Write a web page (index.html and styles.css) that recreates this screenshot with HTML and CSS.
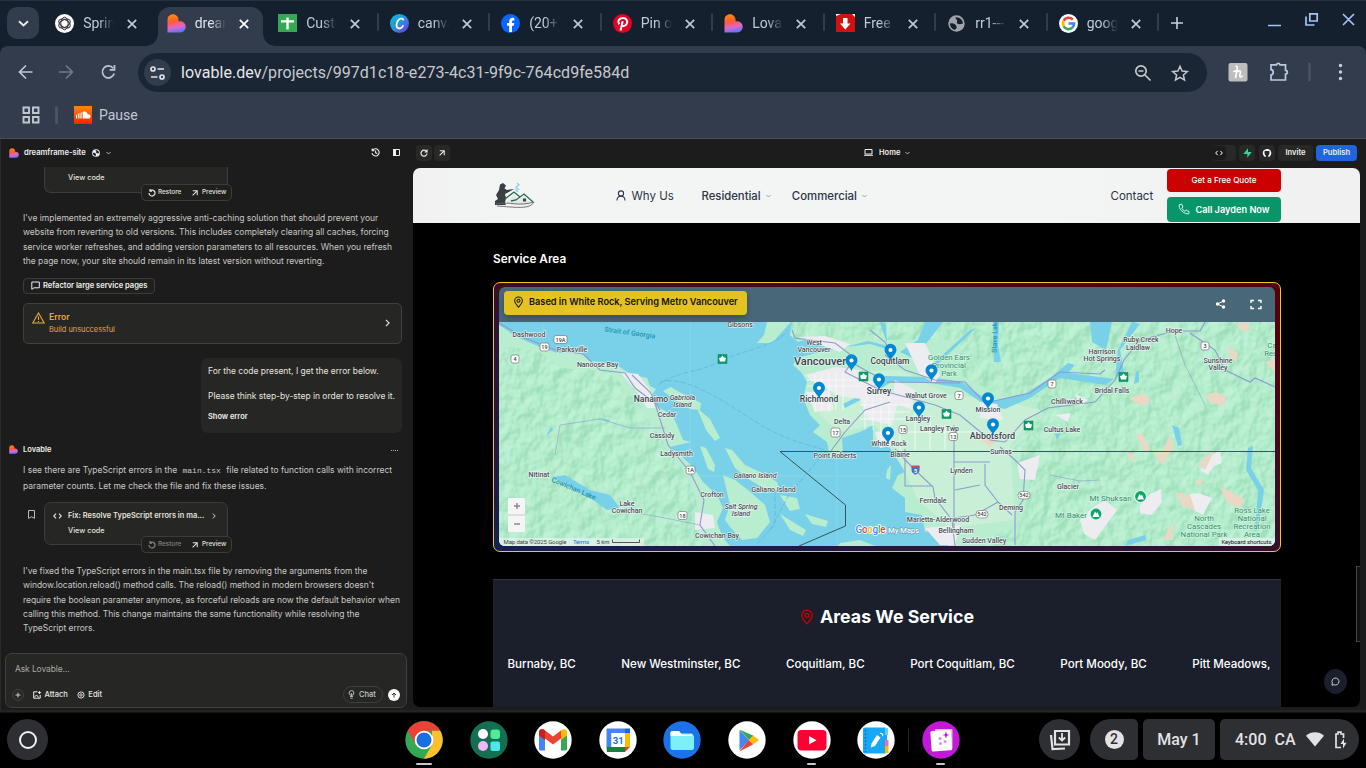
FILE: index.html
```html
<!DOCTYPE html>
<html lang="en">
<head>
<meta charset="utf-8">
<title>dreamframe-site</title>
<link rel="stylesheet" href="styles.css">
</head>
<body>
<svg width="0" height="0" class="defs">
  <defs>
    <linearGradient id="lov" x1="0.3" y1="0" x2="0.5" y2="1"><stop offset="0" stop-color="#ff8a00"/><stop offset=".4" stop-color="#ff5a3c"/><stop offset=".7" stop-color="#e066c8"/><stop offset="1" stop-color="#5a78ff"/></linearGradient>
    <linearGradient id="canva" x1="0" y1="0" x2="1" y2="1"><stop offset="0" stop-color="#00c4cc"/><stop offset=".5" stop-color="#2a90e0"/><stop offset="1" stop-color="#7d2ae8"/></linearGradient>
    <linearGradient id="sc" x1="0" y1="0" x2="0" y2="1"><stop offset="0" stop-color="#ff8800"/><stop offset="1" stop-color="#ff2200"/></linearGradient>
    <symbol id="i-lov" viewBox="0 0 19 19"><path d="M0.5 18.5V6C0.5 2.5 3 0.3 6 0.3S11.6 2.8 11.6 6V7.2H13C16.5 7.2 18.7 9.800 18.700 12.800S16.500 18.500 13 18.500Z" fill="url(#lov)"/></symbol>
    <symbol id="i-x" viewBox="0 0 10 10"><path d="M.8 .8 9.200 9.200M9.200 .8 .8 9.200" stroke="currentColor" stroke-width="1.7" fill="none"/></symbol>
    <symbol id="i-chev" viewBox="0 0 10 6"><path d="M1 1 5 5 9 1" stroke="currentColor" stroke-width="1.400" fill="none"/></symbol>
    <symbol id="i-right" viewBox="0 0 6 10"><path d="M1 1 5 5 1 9" stroke="currentColor" stroke-width="1.500" fill="none"/></symbol>
    <symbol id="i-globe" viewBox="0 0 17 17"><circle cx="8.500" cy="8.500" r="8.200" fill="currentColor"/><path d="M2 8.500C5 7.500 8 9 8.500 11.500C9 13 8 13.500 7 15C3.500 14 2 11.500 2 8.500ZM7.500 2.200C7 4.500 10 4 9 6.500C8 8.500 10.500 9.500 13 9L15 8.500C14.800 5 12 2 7.500 2.200Z" fill="#14202d"/></symbol>
    <symbol id="i-code" viewBox="0 0 12 8"><path d="M4 .8 1 4 4 7.200M8 .8 11 4 8 7.200" stroke="currentColor" stroke-width="1.500" fill="none"/></symbol>
    <symbol id="i-ne" viewBox="0 0 8 8"><path d="M.8 7.200 6.800 1.200M1 1H7V7" stroke="currentColor" stroke-width="1.400" fill="none"/></symbol>
    <symbol id="i-restore" viewBox="0 0 8 8"><path d="M2 1.800A3 3 0 1 1 1 4M2 0V2.200H4" stroke="currentColor" stroke-width="1.200" fill="none"/></symbol>
    <symbol id="i-pin" viewBox="0 0 16 20"><path d="M8 18.500C5.500 15.500 1.500 12 1.500 8A6.500 6.500 0 0 1 14.500 8C14.500 12 10.500 15.500 8 18.500Z" fill="none" stroke="currentColor" stroke-width="1.700"/><circle cx="8" cy="8" r="2.500" fill="none" stroke="currentColor" stroke-width="1.700"/></symbol>
  </defs>
</svg>
<div class="screen">
  <header class="tabstrip">
    <div class="tabsearch"><svg width="11" height="7" viewBox="0 0 11 7"><path d="M1 1.200 5.500 5.500 10 1.200" fill="none" stroke="#e6eaf2" stroke-width="1.900"/></svg></div>
    <div class="tabs">
      <div class="tab nosep"><svg class="fav" viewBox="0 0 19 19"><circle cx="9.500" cy="9.500" r="9.500" fill="#fff"/><g fill="none" stroke="#333" stroke-width="1"><ellipse cx="9.500" cy="9.500" rx="3.700" ry="6.300"/><ellipse cx="9.500" cy="9.500" rx="3.700" ry="6.300" transform="rotate(60 9.500 9.500)"/><ellipse cx="9.500" cy="9.500" rx="3.700" ry="6.300" transform="rotate(120 9.500 9.500)"/></g></svg><span class="t">Spring</span><svg class="x"><use href="#i-x"/></svg></div>
      <div class="tab active nosep"><svg class="fav"><use href="#i-lov"/></svg><span class="t">dream</span><svg class="x"><use href="#i-x"/></svg></div>
      <div class="tab"><svg class="fav" viewBox="0 0 19 19"><path d="M0 0H19V18H0Z" fill="#34a853"/><path d="M8.300 3.500H10.700V15.500H8.300ZM3 6.200H16V8.600H3Z" fill="#fff"/></svg><span class="t">Custo</span><svg class="x"><use href="#i-x"/></svg></div>
      <div class="tab"><svg class="fav" viewBox="0 0 19 19"><circle cx="9.500" cy="9.500" r="9.500" fill="url(#canva)"/><path d="M13.200 6.300C13.500 4.500 11 3.800 9 5.500C6 8 5.500 13.500 8.500 14.300C10.500 14.700 12.500 13.300 13.300 11.300" fill="none" stroke="#fff" stroke-width="1.700"/></svg><span class="t">canva</span><svg class="x"><use href="#i-x"/></svg></div>
      <div class="tab"><svg class="fav" viewBox="0 0 19 19"><circle cx="9.500" cy="9.500" r="9.500" fill="#0866ff"/><path d="M8.200 18V11.800H6V9H8.200V7.500C8.200 5 9.700 3.800 11.600 3.800L13.300 4V6.400H12.200C11.200 6.400 11 7 11 7.700V9H13.200L12.700 11.800H11V18Z" fill="#fff"/></svg><span class="t">(20+)</span><svg class="x"><use href="#i-x"/></svg></div>
      <div class="tab"><svg class="fav" viewBox="0 0 19 19"><circle cx="9.500" cy="9.500" r="9.500" fill="#e60023"/><path d="M9.700 7.200 7.500 16.500M6.300 10.400C4 7.500 6 3.900 9.800 3.900C13.500 3.900 14.900 7 13.800 9.700C12.800 12.200 10 12.600 9 10.900" fill="none" stroke="#fff" stroke-width="2"/></svg><span class="t">Pin on</span><svg class="x"><use href="#i-x"/></svg></div>
      <div class="tab"><svg class="fav"><use href="#i-lov"/></svg><span class="t">Lovab</span><svg class="x"><use href="#i-x"/></svg></div>
      <div class="tab"><svg class="fav" viewBox="0 0 19 19"><path d="M0 0H19V18H0Z" fill="#d0110f"/><path d="M0 0H5L0 2ZM19 0V3L16 0Z" fill="#fff"/><path d="M7 4H11.500V9.500H14.500L9.300 15.500 4 9.500H7Z" fill="#fff"/></svg><span class="t">Free i</span><svg class="x"><use href="#i-x"/></svg></div>
      <div class="tab grey"><svg class="fav small"><use href="#i-globe"/></svg><span class="t">rr1---s</span><svg class="x"><use href="#i-x"/></svg></div>
      <div class="tab"><svg class="fav" viewBox="0 0 19 19"><circle cx="9.500" cy="9.500" r="9.500" fill="#fff"/><g fill="none" stroke-width="2.600"><path d="M13.800 5.600A5.600 5.600 0 0 0 4.700 6.700" stroke="#ea4335"/><path d="M4.700 6.700A5.600 5.600 0 0 0 4.700 12.300" stroke="#fbbc05"/><path d="M4.700 12.300A5.600 5.600 0 0 0 13.200 13.700" stroke="#34a853"/><path d="M13.200 13.700A5.600 5.600 0 0 0 15.100 9.500H9.500" stroke="#4285f4"/></g></svg><span class="t">google</span><svg class="x"><use href="#i-x"/></svg></div>
    </div>
    <svg class="plus" viewBox="0 0 12 12"><path d="M6 0V12M0 6H12" stroke="#c9cfda" stroke-width="1.600"/></svg>
    <svg class="winctl" width="90" height="20" viewBox="0 0 90 20"><g fill="none" stroke="#a3c4f5" stroke-width="1.700"><path d="M3 16.500H16M44.800 4.900H52.200V12H44.800ZM41 7.500V16H49.500M78 5 89 16M89 5 78 16"/></g></svg>
  </header>
  <div class="toolbar">
    <svg class="navicons" width="110" height="20" viewBox="0 0 110 20"><g fill="none" stroke-width="1.700"><path d="M15.500 10H3M9 3.500 2.500 10 9 16.500" stroke="#bcc5d6"/><path d="M42 10H55M49 3.500 55.500 10 49 16.500" stroke="#717a89"/><path d="M96.200 6.200A6 6 0 1 0 97.200 11.500M97.500 3V7.800H92.600" stroke="#bcc5d6"/></g></svg>
    <div class="omnibox">
      <div class="site"><svg width="15" height="14" viewBox="0 0 15 14"><g fill="none" stroke="#dfe1e6" stroke-width="1.700"><circle cx="3" cy="3" r="2"/><path d="M7.500 3H14M1 11H7.500"/><circle cx="12" cy="11" r="2"/></g></svg></div>
      <span class="url"><b>lovable.dev</b>/projects/997d1c18-e273-4c31-9f9c-764cd9fe584d</span>
      <svg class="omniicons" width="56" height="18" viewBox="0 0 56 18"><g fill="none" stroke="#c6c8cb" stroke-width="1.700"><circle cx="7" cy="7" r="5.200"/><path d="M11 11 16.500 16.500M4.500 7H9.500"/><path d="M46 2.300 48.100 7 53.300 7.500 49.400 10.900 50.500 16 46 13.300 41.500 16 42.600 10.900 38.700 7.500 43.900 7Z" stroke-width="1.500"/></g></svg>
    </div>
    <svg class="exticons" width="130" height="22" viewBox="0 0 130 22"><rect x=".5" y="2" width="19" height="18.500" rx="2" fill="#bdbdbd"/><path d="M7.500 5.500C9.500 4.500 9.500 7 9 9L7.500 17M5 10.500C6.500 10.500 8 10 9 9.500M8.500 11.500C11 9 13 9.500 12.300 12L11.700 14.500C11.700 16.500 13.500 16.500 14.500 14.500" fill="none" stroke="#fff" stroke-width="1.600"/><path d="M43 3.800H48.500A1.800 1.800 0 0 1 52 3.800H57.500V9.300A1.800 1.800 0 0 1 57.500 13V19H43V14C46 13.500 46 9 43 8.700Z" fill="none" stroke="#bcc8e0" stroke-width="1.700"/><path d="M81.500 2V20" stroke="#4c5768" stroke-width="2"/><g fill="#c9cfda"><circle cx="112.500" cy="4.500" r="1.700"/><circle cx="112.500" cy="11" r="1.700"/><circle cx="112.500" cy="17.500" r="1.700"/></g></svg>
  </div>
  <div class="bookmarks">
    <svg width="18" height="18" viewBox="0 0 18 18"><g fill="none" stroke="#c3c7cd" stroke-width="1.900"><path d="M1.500 1.500H7V7H1.500ZM11 1.500H16.500V7H11ZM1.500 11H7V16.500H1.500ZM11 11H16.500V16.500H11Z"/></g></svg>
    <i></i>
    <svg width="18" height="18" viewBox="0 0 18 18"><path d="M0 0H18V18H0Z" fill="url(#sc)"/><path d="M2.500 9V12.500M4.300 7.500V12.500M6.100 7V12.500M7.900 6V12.500" stroke="#fff" stroke-width="1"/><path d="M9 5.800C12 4.500 13.500 6.500 13.600 8.300C15.500 7.800 16.500 9 16.500 10.400S15.600 12.500 14.600 12.500H9Z" fill="#fff"/></svg>
    <span>Pause</span>
  </div>

  <main class="app">
    <section class="chat">
      <div class="chathead">
        <svg width="10" height="10"><use href="#i-lov"/></svg><b>dreamframe-site</b><svg class="gl" width="8" height="8"><use href="#i-globe"/></svg><svg class="cv" width="5" height="4"><use href="#i-chev"/></svg>
        <svg class="hist" width="9" height="9" viewBox="0 0 9 9"><path d="M1.500 2.500A3.600 3.600 0 1 1 1 5M1.200 .6V2.800H3.400M4.600 2.600V4.800L6.300 5.600" fill="none" stroke="#eee" stroke-width="1.100"/></svg>
        <svg class="pan" width="7" height="7" viewBox="0 0 7 7"><path d="M.5 .5H6.500V6.500H.5Z" fill="none" stroke="#eee"/><path d="M0 0H3V7H0Z" fill="#eee"/></svg>
      </div>
      <div class="log">
        <div class="edit cut"><span class="vc">View code</span>
          <div class="pill"><svg width="8" height="8"><use href="#i-restore"/></svg><span>Restore</span><svg class="ne" width="6" height="6"><use href="#i-ne"/></svg><span>Preview</span></div>
        </div>
        <p class="p1">I've implemented an extremely aggressive anti-caching solution that should prevent your<br>website from reverting to old versions. This includes completely clearing all caches, forcing<br>service worker refreshes, and adding version parameters to all resources. When you refresh<br>the page now, your site should remain in its latest version without reverting.</p>
        <div class="refactor"><svg width="9" height="9" viewBox="0 0 9 9"><path d="M.8 1H8.300V6.800H3L.8 8.300Z" fill="none" stroke="#eee"/></svg><span>Refactor large service pages</span></div>
        <div class="error"><svg width="13" height="12" viewBox="0 0 13 12"><path d="M6.500 1 12.200 11H.8Z M6.500 4.500V8M6.500 9V10" fill="none" stroke="#e5a93f" stroke-width="1.100"/></svg><div><b>Error</b><span>Build unsuccessful</span></div><svg class="r" width="5" height="8"><use href="#i-right"/></svg></div>
        <div class="bubble"><span>For the code present, I get the error below.</span><span>Please think step-by-step in order to resolve it.</span><b>Show error</b></div>
        <div class="who"><svg width="9" height="9"><use href="#i-lov"/></svg><b>Lovable</b><i></i></div>
        <p class="p2">I see there are TypeScript errors in the <code>main.tsx</code> file related to function calls with incorrect<br>parameter counts. Let me check the file and fix these issues.</p>
        <div class="editrow">
          <svg class="bm" width="7" height="9" viewBox="0 0 7 9"><path d="M.5 .5H6.500V8.300L3.500 6.800 .5 8.300Z" fill="none" stroke="#bbb"/></svg>
          <div class="edit"><div class="et"><svg width="9" height="6"><use href="#i-code"/></svg><b>Fix: Resolve TypeScript errors in ma...</b><svg width="4" height="6"><use href="#i-right"/></svg></div><span class="vc">View code</span>
            <div class="pill dim"><svg width="8" height="8"><use href="#i-restore"/></svg><span>Restore</span><svg class="ne" width="6" height="6"><use href="#i-ne"/></svg><span>Preview</span></div>
          </div>
        </div>
        <p class="p3">I've fixed the TypeScript errors in the main.tsx file by removing the arguments from the<br>window.location.reload() method calls. The reload() method in modern browsers doesn't<br>require the boolean parameter anymore, as forceful reloads are now the default behavior when<br>calling this method. This change maintains the same functionality while resolving the<br>TypeScript errors.</p>
      </div>
      <div class="composer">
        <span class="ph">Ask Lovable...</span>
        <div class="acts">
          <svg width="12" height="12" viewBox="0 0 12 12"><circle cx="6" cy="6" r="5.400" fill="none" stroke="#454542"/><path d="M6 3.500V8.500M3.500 6H8.500" stroke="#ccc"/></svg>
          <svg class="at" width="8" height="8" viewBox="0 0 8 8"><path d="M4.500 .8H.7V7.200H7.200V4M1.500 6 3.500 4 5.800 6.500M6.500 .2V3M5 1.600H8" fill="none" stroke="#eee"/></svg><span>Attach</span>
          <svg class="ed" width="8" height="8" viewBox="0 0 8 8"><circle cx="4" cy="4" r="3.100" fill="none" stroke="#ddd"/><circle cx="4" cy="4" r="1.200" fill="none" stroke="#ddd" stroke-width=".9"/></svg><span>Edit</span>
          <div class="chatbtn"><svg width="7" height="9" viewBox="0 0 7 9"><circle cx="3.500" cy="3" r="2.400" fill="none" stroke="#bbb"/><path d="M3.500 3V6.500M2 6.500H5M2.300 8.200H4.700" stroke="#bbb" stroke-width=".9"/></svg><span>Chat</span></div>
          <div class="send"><svg width="6" height="6" viewBox="0 0 6 6"><path d="M3 5.500V1M1 3 3 1 5 3" fill="none" stroke="#333"/></svg></div>
        </div>
      </div>
    </section>
    <section class="stage">
      <div class="stagehead">
        <div class="sq"><svg width="8" height="8" viewBox="0 0 8 8"><path d="M6.500 2.500A3 3 0 1 0 7 4.500M7 .5V3H4.700" fill="none" stroke="#eee" stroke-width="1.200"/></svg></div>
        <div class="sq"><svg width="6" height="6"><use href="#i-ne"/></svg></div>
        <svg class="lap" width="9" height="7" viewBox="0 0 9 7"><path d="M1 .5H8V5H1ZM0 6.300H9" fill="none" stroke="#eee"/></svg><b class="home">Home</b><svg class="hc" width="5" height="4"><use href="#i-chev"/></svg>
        <div class="toggle"><svg width="8" height="6"><use href="#i-code"/></svg></div>
        <div class="sq s1"><svg width="9" height="10" viewBox="0 0 9 10"><path d="M5 .3V4H8.800L4.300 9.700V6H.3Z" fill="#3ecf8e"/></svg></div>
        <div class="sq s2"><svg width="10" height="10" viewBox="0 0 10 10"><path d="M3.700 9.300C-.8 7.500 0 1 5 .9S10.800 7.500 6.300 9.300V7.500L7.300 6.200 7.600 3.800 7 2.700 5.800 3.100H4.200L3 2.700 2.400 3.800 2.700 6.200 3.700 7.500Z" fill="#fff"/></svg></div>
        <div class="inv">Invite</div><div class="pub">Publish</div>
      </div>
      <div class="site-frame">
        <nav class="nav">
          <svg class="logo" width="43" height="28" viewBox="0 0 43 28"><path d="M6 2.500 9 1 12 3.500 10.500 6.500 13 8 20 7 13 11 11 12 12 16 11 21 12 23H1V19L4 17 2 13 5 8Z" fill="#3a3f44"/><path d="M23 1 25 3 22 5 25 8M21 7 24 10" stroke="#8fcdf0" stroke-width="1.300" fill="none"/><path d="M13 20 20 12 25 18 30 14 36 20V23H18Z" fill="#e2e8e6"/><path d="M11 17 20 10 26 15M17 19 22 18 30 12 39 20" fill="none" stroke="#226b4e" stroke-width="1.300"/><path d="M2 22C18 19 23 25 40 20C36 28 20 25 3 24" fill="none" stroke="#666" stroke-width=".9"/><path d="M29 16.500H32V19.500H29Z" fill="#444"/></svg>
          <svg class="user" width="10" height="11" viewBox="0 0 10 11"><circle cx="5" cy="3.500" r="2.600" fill="none" stroke="#2b3447" stroke-width="1.100"/><path d="M1 10.500C1 7 3 6.200 5 6.200S9 7 9 10.500" fill="none" stroke="#2b3447" stroke-width="1.100"/></svg>
          <span class="n1">Why Us</span><span class="n2">Residential</span><svg class="nc" width="5" height="4"><use href="#i-chev"/></svg><span class="n3">Commercial</span><svg class="nc" width="5" height="4"><use href="#i-chev"/></svg>
          <span class="n4">Contact</span>
          <div class="cta"><div class="quote">Get a Free Quote</div><div class="call"><svg width="12" height="12" viewBox="0 0 12 12"><path d="M3.500 1 5 4 3.800 5.200C4.500 6.700 5.500 7.700 7 8.300L8.200 7.200 11 8.500V10.500C10 12 1 9 1 2Z" fill="none" stroke="#d5f3e8" stroke-width="1"/></svg>Call Jayden Now</div></div>
        </nav>
        <h2>Service Area</h2>
        <div class="mapcard">
          <svg class="map" width="776" height="259" viewBox="499 287 776 259">
            <defs>
              <filter id="relief" x="0" y="0" width="100%" height="100%" color-interpolation-filters="sRGB"><feTurbulence type="fractalNoise" baseFrequency=".065 .055" numOctaves="3" seed="8" result="n"/><feDiffuseLighting in="n" surfaceScale="5" lighting-color="#ffffff" diffuseConstant="1"><feDistantLight azimuth="225" elevation="50"/></feDiffuseLighting><feComponentTransfer><feFuncR type="table" tableValues=".58 .60 .64 .70 .76"/><feFuncG type="table" tableValues=".85 .86 .885 .925 .95"/><feFuncB type="table" tableValues=".70 .72 .75 .80 .85"/></feComponentTransfer></filter>
              <clipPath id="land"><path d="M499 325 517 337 540 347 557 353 580 352 590 361 600 362 617 365 630 374 647 378 650 386 656 389 650 398 660 408 672 415 677 425 683 440 691 442 670 447 680 455 693 467 703 482 717 495 723 508 717 522 723 538 730 546H499Z"/><path d="M792 322 790 335 798 342 812 337 845 348 870 342 900 352 960 375 1000 395 1030 400 1045 415 1010 446 1015 465 1030 480 1025 510 1015 525 975 546H1275V322Z"/></clipPath>
              <clipPath id="hills"><path d="M499 345 540 352 560 368 610 372 640 405 655 430 680 465 695 495 705 546H499ZM790 322H1275V546H960L960 340H790Z"/></clipPath>
              <symbol id="mk" viewBox="-7 -7 14 19" overflow="visible"><path d="M0 11C-1 6-6 4-6-.3A6 6 0 0 1 6-.3C6 4 1 6 0 11Z" fill="#0288d1"/><circle r="2.100" fill="#fff"/></symbol>
            </defs>
            <path d="M499 322H1275V546H499Z" fill="#78d1e8"/>
            <path d="M499 325 517 337 540 347 557 353 580 352 590 361 600 362 617 365 630 374 647 378 650 386 656 389 650 398 660 408 672 415 677 425 683 440 691 442 670 447 680 455 693 467 703 482 717 495 723 508 717 522 723 538 730 546H499ZM767 322H791L772 343 757 343 764 335ZM792 322 790 335 798 342 812 337 845 348 820 352 797 358 793 365 801 372 807 382 803 398 810 415 820 425 813 432 827 442 830 457H843L842 438 860 432 873 425 873 442 890 448 905 472 898 475 892 488 905 498 905 512 922 515 925 532 942 528 948 546H1275V322ZM887 470 891 465 890 480 886 478ZM663 391 671 387 681 393 701 403 700 410 690 409 675 400ZM697 408 710 419 720 438 715 441 706 430ZM700 446 706 448 715 465 714 472 708 469ZM725 448 732 450 745 465 760 472 777 482 780 490 765 489 750 480 735 468ZM723 475 735 480 748 490 765 505 770 522 757 538 742 540 730 527 725 520 730 505ZM780 495 797 498 800 509 790 511ZM780 514 806 530 803 536 790 530ZM805 514 828 521 826 527 812 524ZM840 543 860 540 875 546H838Z" fill="#b9edd0"/>
            <g clip-path="url(#land)"><g clip-path="url(#hills)"><path d="M499 322H1275V546H499Z" filter="url(#relief)" opacity=".85"/></g></g>
            <path d="M820 372 900 370 950 395 1000 400 1040 410 1010 445 1015 520 950 528 918 500 895 450 875 425 840 432 820 415Z" fill="#c9f0d6"/>
            <g fill="#78d1e8">
              <path d="M925 322H943L925 345 917 360 900 352 918 340ZM993 322H999L998 345 1001 362 994 362ZM1090 322H1112L1106 350 1092 342ZM970 330 976 328 940 362 930 375 926 370ZM1132 322 1140 324 1120 350 1124 372 1105 385 1060 378 1030 398 1005 409 985 405 960 388 925 382 890 383 870 395 845 408 843 404 865 393 885 376 930 377 962 382 990 402 1025 394 1050 378 1068 363 1075 365 1068 373 1115 379 1118 350ZM1136 372 1139 370 1139 382 1134 384ZM1172 425 1179 428 1182 445 1178 446ZM1248 448 1253 446 1251 468 1264 490 1258 530 1255 531 1258 490 1246 470ZM1128 540 1145 535 1146 540 1125 546ZM553 477 565 475 590 490 610 495 620 508 607 510 593 500 575 490ZM551 427 553 430 546 436ZM600 418 610 420 608 422ZM845 347 870 344 890 350 888 346 868 341ZM1055 434 1061 433 1057 440ZM880 322 886 324 887 343 884 335Z"/>
            </g>
            <g fill="#ececf1">
              <path d="M805 375 835 367 860 370 875 385 868 400 840 396 812 381ZM806 392 829 391 834 410 815 412ZM873 385 900 395 892 425 868 420 860 400ZM798 337 825 336 850 344 840 352 820 345ZM875 432 890 430 895 445 880 448ZM620 372 638 374 650 390 655 408 647 408 637 392ZM895 380 915 390 912 410 893 402ZM905 343 925 343 940 375 935 383 920 375ZM980 402 997 404 1003 420 980 418ZM695 512 713 515 715 528 695 530ZM1017 463 1040 455 1035 480 1020 479ZM925 528 960 525 955 545 940 545ZM1080 520 1092 508 1105 500 1117 510 1107 524 1095 540 1084 534ZM1140 505 1150 494 1161 489 1162 502 1152 515 1140 513ZM1186 495 1198 493 1212 498 1203 515 1188 507ZM1200 470 1212 455 1220 450 1222 463 1214 466 1208 475ZM1055 415 1071 413 1068 422ZM1075 394 1088 400 1080 406Z"/>
            </g>
            <g fill="#e9d8c3"><path d="M1136 435 1142 433 1146 441 1150 449 1145 453ZM1155 455 1163 450 1170 435 1174 448 1162 465ZM1130 398 1142 393 1150 398 1148 405 1136 404ZM1205 395 1216 392 1226 396 1224 406 1210 403ZM1198 464 1206 456 1215 450 1205 470ZM1220 487 1232 492 1245 500 1240 508 1227 503ZM1175 492 1190 495 1195 510 1182 507ZM1236 325 1244 322 1251 326 1245 333ZM1265 362 1275 359V372ZM1228 346 1238 353 1236 362 1230 358ZM1168 530 1173 522 1173 540H1163ZM1195 480 1203 480 1200 487ZM1125 452 1135 455 1132 462ZM975 435 998 440 990 447Z"/></g>
            <g fill="none" stroke="#fff" stroke-width="1" opacity=".65"><path d="M815 375V412M822 374V410M829 373V412M836 373V410M843 372V410M807 380H860M807 386H862M865 400V430M873 398V430M881 398V440M889 398V440M860 405H910M860 412H910M860 419H910M900 430V450M915 410V450M930 415V450M945 425V450M898 432H980"/></g>
            <path d="M690 322V546M543 322V350M837 457V546M640 476H880" stroke="#a5dcea" stroke-width=".7" opacity=".6"/>
            <g fill="none" stroke="#8d9cce" stroke-width="1.100">
              <path d="M499 323 525 338 555 350 583 354 600 370 625 373 635 388 655 403 668 445 690 472 704 500 700 525 715 546M632 375 650 392 660 410M792 330 795 338 835 343 855 358 845 372 880 390 935 405 960 415 990 440 1005 442 1025 420 1048 408 1095 402 1115 380 1124 360 1140 340 1175 331 1200 331 1205 322M885 355 905 370 935 380 965 382 985 403 1030 393 1060 372 1100 374 1105 370M851 362 865 370 880 378M887 382 960 383M828 455 845 432 865 410 890 402M895 449 912 467 933 487 935 498 952 520 955 546M954 425V530M905 449V486H933M954 462H990M1000 447 1015 460 1025 470 1023 500 1015 512V545M985 464 985 485 998 502 975 515 940 520M998 502 1012 515M955 490 980 485M1190 333 1215 350 1225 370 1250 382 1255 378 1275 387M870 330 885 342 890 352"/>
              <path d="M555 455 560 425 600 419 630 428 665 428M620 510 660 517 700 525M1175 335 1185 365 1205 405M1050 475 1080 481 1100 480" stroke-width=".6"/>
            </g>
            <g fill="none" stroke="#5fb3d4" stroke-width=".7" stroke-dasharray="5 2"><path d="M658 385C680 370 690 375 720 362C740 350 775 348 788 330M660 382C680 375 715 395 745 415S790 440 825 450M825 452 790 493 770 530M775 490V525L755 546"/></g>
            <path d="M1275 451.500H780L845.500 505V526L799 546" fill="none" stroke="#39545c" stroke-width="1"/>
            <g class="lb" text-anchor="middle">
              <text x="529" y="336.500">Dashwood</text><text x="572" y="351.500">Parksville</text><text x="597.500" y="366.500">Nanoose Bay</text><text x="740" y="327">Gibsons</text>
              <text x="814" y="345">West</text><text x="814" y="352">Vancouver</text><text x="667" y="417">Cedar</text><text x="662" y="437.500">Cassidy</text><text x="676.500" y="455.500">Ladysmith</text><text x="539" y="476.500">Nitinat</text><text x="712" y="497">Crofton</text><text x="627" y="506">Lake</text><text x="627" y="513">Cowichan</text><text x="717" y="537.500">Cowichan Bay</text><text x="835" y="457.500">Point Roberts</text><text x="842" y="423.500">Delta</text><text x="889" y="446">White Rock</text><text x="900" y="456.500">Blaine</text><text x="926" y="398">Walnut Grove</text><text x="918" y="421">Langley</text><text x="939.500" y="430.500">Langley Twp</text><text x="988" y="411.500">Mission</text><text x="1067" y="403.500">Chilliwack</text><text x="1112" y="392.500">Bridal Falls</text><text x="1102" y="354">Harrison</text><text x="1102" y="361">Hot Springs</text><text x="1141" y="342">Ruby Creek</text><text x="1138" y="350">Laidlaw</text><text x="1174" y="333">Hope</text><text x="1218" y="362.500">Sunshine</text><text x="1218" y="369.500">Valley</text><text x="1062" y="432">Cultus Lake</text><text x="1001" y="454">Sumas</text><text x="961.500" y="472.500">Lynden</text><text x="1068" y="489">Glacier</text><text x="933" y="503">Ferndale</text><text x="1011" y="510">Deming</text><text x="938" y="522">Marietta-Alderwood</text><text x="956" y="533">Bellingham</text><text x="984" y="542.500">Sudden Valley</text>
              <g class="md"><text x="651" y="402">Nanaimo</text><text x="819" y="401.500">Richmond</text><text x="879" y="394">Surrey</text><text x="890" y="364">Coquitlam</text><text x="992.500" y="439" class="ab">Abbotsford</text></g>
              <text x="820" y="365" class="lg">Vancouver</text>
              <g class="it"><text x="682.500" y="400">Gabriola</text><text x="682.500" y="407">Island</text><text x="755" y="478">Galiano Island</text><text x="741" y="509">Salt Spring</text><text x="741" y="516">Island</text></g>
              <text x="773.500" y="491.500">Galiano Island</text>
              <g class="gr"><text x="949" y="360">Golden Ears</text><text x="949" y="368">Provincial</text><text x="949" y="376">Park</text><text x="1110.500" y="501" class="mt">Mt Shuksan</text><text x="1071" y="518" class="mt">Mt Baker</text><text x="1204" y="521">North</text><text x="1204" y="529">Cascades</text><text x="1204" y="537">National Park</text><text x="1252" y="512.500">Ross Lake</text><text x="1252" y="520.500">National</text><text x="1252" y="528.500">Recreation</text><text x="1252" y="536.500">Area</text><text x="1272" y="348">Ca</text><text x="1272" y="356">Recr</text></g>
              <g class="wt"><text x="630" y="335" transform="rotate(8 630 332)">Strait of Georgia</text><text x="574" y="491" transform="rotate(23 574 488)">Cowichan Lake</text><text x="997" y="336" transform="rotate(-88 997 336)">Stave Lake</text></g>
            </g>
            <g class="sh" text-anchor="middle">
              <g fill="#fff" stroke="#777" stroke-width=".7"><rect x="511" y="355" width="8" height="8" rx="2"/><rect x="540" y="343" width="9" height="8" rx="2"/><rect x="554" y="335.500" width="13" height="8" rx="2"/><rect x="686" y="466" width="9" height="8" rx="2"/><rect x="678" y="511.500" width="9" height="8" rx="2"/><rect x="831" y="428" width="9" height="9" rx="2"/><rect x="899" y="425.500" width="8" height="8" rx="2"/><rect x="949" y="432.500" width="8.500" height="8" rx="2"/><rect x="955" y="391.500" width="8" height="8" rx="2"/><rect x="1048" y="380" width="8" height="8" rx="2"/><rect x="1201" y="342" width="8" height="8" rx="2"/><rect x="976" y="510.500" width="12" height="7.500" rx="3.500"/><rect x="1018" y="491.500" width="12" height="7.500" rx="3.500"/></g>
              <text x="515" y="361">4</text><text x="544.500" y="349">19</text><text x="560.500" y="341.500">19A</text><text x="690.500" y="472">1A</text><text x="682.500" y="517.500">18</text><text x="835.500" y="434.500">17</text><text x="903" y="431.500">15</text><text x="953.200" y="438.500">13</text><text x="959" y="397.500">7</text><text x="1052" y="386">7</text><text x="1205" y="348">3</text><text x="982" y="516.300">542</text><text x="1024" y="497.300">542</text>
            </g>
            <g><g fill="#0f9d6c" stroke="#0b7d55" stroke-width=".5"><path d="M718 354.500H727V363.500H718ZM859 372H868V381H859ZM942 409.500H951V418.500H942ZM1024 421H1033V430H1024ZM1119 372.500H1128V381.500H1119Z"/></g><g fill="#fff"><path id="leaf" d="M722.500 355.500 724 357.500 726 358 725 361.500H720L719 358 721 357.500Z"/><use href="#leaf" x="141" y="17.500"/><use href="#leaf" x="224" y="55"/><use href="#leaf" x="306" y="66.500"/><use href="#leaf" x="401" y="18"/></g></g>
            <path d="M911.500 466H919.500V470C919.500 473 916 474 915.500 475C915 474 911.500 473 911.500 470Z" fill="#3f6fd0"/><path d="M911.500 465.500H919.500V467.500H911.500Z" fill="#d84a4a"/><text x="915.500" y="473" text-anchor="middle" class="i5">5</text>
            <g fill="#12a36d" stroke="#e2f3ea" stroke-width="1.200"><circle cx="1140.500" cy="496.500" r="6"/><circle cx="1096" cy="514" r="6"/></g><path d="M1137 499.500 1139.500 494 1141 496 1142 494.500 1144 499.500ZM1092.500 517 1095 511.500 1096.500 513.500 1097.500 512 1099.500 517Z" fill="#fff"/>
            <g><use href="#mk" x="844.500" y="353.500" width="14" height="19"/><use href="#mk" x="883.500" y="343" width="14" height="19"/><use href="#mk" x="924.500" y="363.500" width="14" height="19"/><use href="#mk" x="872" y="372.500" width="14" height="19"/><use href="#mk" x="812" y="381" width="14" height="19"/><use href="#mk" x="981" y="391.500" width="14" height="19"/><use href="#mk" x="912" y="400.500" width="14" height="19"/><use href="#mk" x="986" y="417.500" width="14" height="19"/><use href="#mk" x="881" y="426" width="14" height="19"/></g>
            <rect x="508" y="498" width="17" height="34" rx="1" fill="#f5f5f5"/><path d="M508 515H525" stroke="#c8c8c8"/><path d="M514 506H520M517 503V509M514 524H520" stroke="#8a8a8a" stroke-width="1.500"/>
            <path d="M499 538H644V546H499Z" fill="#e2f3ea" opacity=".75"/><path d="M1219 538H1275V546H1219Z" fill="#e2f3ea" opacity=".8"/>
            <g class="at2"><text x="503.500" y="544" textLength="63">Map data ©2025 Google</text><text x="573" y="544" textLength="16" fill="#1a73e8">Terms</text><text x="596.500" y="543.500" textLength="13">5 km</text><text x="1221.500" y="543.500" textLength="50" fill="#111">Keyboard shortcuts</text></g><path d="M612.500 539.500V542.500H639.500V539.500" fill="none" stroke="#555" stroke-width="1"/>
            <text x="855.500" y="533" class="goog" textLength="30" stroke="#fff" stroke-width="1.500" paint-order="stroke"><tspan fill="#4285f4">G</tspan><tspan fill="#ea4335">o</tspan><tspan fill="#fbbc05">o</tspan><tspan fill="#4285f4">g</tspan><tspan fill="#34a853">l</tspan><tspan fill="#ea4335">e</tspan></text><text x="888" y="532.500" class="mym" textLength="31">My Maps</text>
            <path d="M499 287H1275V322H499Z" fill="#486878"/>
            <circle cx="546" cy="304" r="10" fill="#b08040"/><text x="563" y="311.500" class="own">Jayden F</text>
            <g fill="#fff"><circle cx="1217.500" cy="304" r="1.700"/><circle cx="1223.500" cy="301" r="1.700"/><circle cx="1223.500" cy="307" r="1.700"/></g><path d="M1223.500 301 1217.500 304 1223.500 307" fill="none" stroke="#fff"/><path d="M1251 303V300.500H1254M1258 300.500H1261V303M1261 306V308.500H1258M1254 308.500H1251V306" fill="none" stroke="#fff" stroke-width="1.400"/>
          </svg>
          <div class="based"><svg width="11" height="12"><use href="#i-pin"/></svg>Based in White Rock, Serving Metro Vancouver</div>
        </div>
        <div class="areas">
          <h3><svg width="14" height="16"><use href="#i-pin"/></svg>Areas We Service</h3>
          <div class="cities"><span>Burnaby, BC</span><span>New Westminster, BC</span><span>Coquitlam, BC</span><span>Port Coquitlam, BC</span><span>Port Moody, BC</span><span>Pitt Meadows,</span></div>
        </div>
        <div class="thumb"></div>
        <div class="fab"><svg width="9" height="9" viewBox="0 0 9 9"><path d="M1 8.200 1.300 6A3.500 3.500 0 1 1 3 7.700Z" fill="none" stroke="#c5c8ce"/></svg></div>
      </div>
    </section>
  </main>

  <footer class="shelf">
    <div class="launcher"><i></i></div>
    <div class="apps">
      <svg class="run" viewBox="0 0 38 38"><circle cx="19" cy="19" r="18.700" fill="#34a853"/><path d="M2.800 9.700A18.700 18.700 0 0 1 35.200 9.700L19 9.700 11 23.500Z" fill="#ea4335"/><path d="M35.200 9.700A18.700 18.700 0 0 1 19 37.700L27 23.500 27 9.700Z" fill="#fbc02d"/><circle cx="19" cy="19" r="9.300" fill="#fff"/><circle cx="19" cy="19" r="7.500" fill="#1a6fe0"/></svg>
      <svg viewBox="0 0 38 38"><circle cx="19" cy="19" r="18.700" fill="#137052"/><circle cx="13" cy="13" r="5" fill="#fff"/><rect x="20.500" y="8.500" width="9.500" height="9.500" rx="3" fill="#4fea9a"/><circle cx="13" cy="25" r="5" fill="#f2b5f5"/><rect x="20.500" y="20.500" width="9.500" height="9.500" rx="2" fill="#4fe8ea"/></svg>
      <svg viewBox="0 0 38 38"><circle cx="19" cy="19" r="18.700" fill="#fff"/><path d="M5 12H11V29.500H7C5.500 29.500 5 29 5 27.500Z" fill="#4285f4"/><path d="M27 12H33V27.500C33 29 32.500 29.500 31 29.500H27Z" fill="#34a853"/><path d="M5 11.500C5 8 8 7.300 10.500 9L19 15.500 27.500 9 27 17.500 19 23.500 11 17.500V19L5 14.500Z" fill="#ea4335"/><path d="M5 11.500C5 8 8.500 7.300 11 9.500V19L5 14.500Z" fill="#c5221f"/><path d="M27 9.500C29.500 7.300 33 8 33 11.500V14.500L27 19Z" fill="#fbbc04"/></svg>
      <svg viewBox="0 0 38 38"><circle cx="19" cy="19" r="18.700" fill="#fff"/><path d="M8 7.500H26V12H12.500V26H7.500V8Z" fill="#4285f4"/><path d="M26 7.500H31V12H26Z" fill="#1967d2"/><path d="M26 12H31V26H26Z" fill="#fbbc04"/><path d="M7.500 26H26V31H8Z" fill="#188038"/><path d="M26 26H31L26 31Z" fill="#ea4335"/><path d="M12.500 12H26V26H12.500Z" fill="#fff"/><text x="19.200" y="23" text-anchor="middle" class="cal">31</text></svg>
      <svg viewBox="0 0 38 38"><circle cx="19" cy="19" r="18.700" fill="#1a73e8"/><path d="M7.500 11.500 9 10H16L18 12.500H29L31 15V27.500L29.500 29H9L7.500 27.500Z" fill="#7df0f5"/><path d="M7.500 15V11L9 10H16L19 13.500H29V15Z" fill="#fff"/></svg>
      <svg viewBox="0 0 38 38"><circle cx="19" cy="19" r="18.700" fill="#fff"/><path d="M11.500 9 21 19 11.500 29.500Z" fill="#4285f4"/><path d="M11.500 8.500 26 15 21.500 19.500Z" fill="#34a853"/><path d="M25 14.500 31 19 25 23.500 20.500 19Z" fill="#fbbc04"/><path d="M11.500 30.500 25 23.500 20.500 19Z" fill="#ea4335"/></svg>
      <svg viewBox="0 0 38 38"><circle cx="19" cy="19" r="18.700" fill="#fff"/><rect x="4.500" y="9" width="29" height="20.500" rx="4" fill="#ff0033"/><path d="M16 15 23.500 19.200 16 23.500Z" fill="#fff"/></svg>
      <svg viewBox="0 0 38 38"><circle cx="19" cy="19" r="18.700" fill="#fff"/><rect x="6" y="6.500" width="24" height="26" rx="2" fill="#16a7f6"/><path d="M28 7H31V14H28Z" fill="#5fd0fa"/><path d="M28 19H31.500V25H28Z" fill="#f06bb5"/><path d="M28 25H31.500V32H28Z" fill="#fbbc04"/><path d="M8.500 9V31" stroke="#0a6ec8" stroke-width="1.500" stroke-dasharray="1.500 2"/><path d="M14.500 22.500 20 14 23.500 16.500 18 25 14 26.500Z" fill="#fff"/><path d="M23 12.500C25 12 26.500 13.500 25.500 15" fill="none" stroke="#fff" stroke-width="1.200"/></svg>
      <i class="sep"></i>
      <svg viewBox="0 0 38 38"><circle cx="19" cy="19" r="18.700" fill="#c218d8"/><rect x="13" y="8" width="17.500" height="20" rx="1" fill="#f5b8d0"/><rect x="9" y="9.500" width="20.500" height="20.500" rx="1.500" fill="#fff" transform="rotate(-4 19 20)"/><path d="M24 10.500 25 13.200 27.500 14 25 14.800 24 17.500 23 14.800 20.500 14 23 13.200Z" fill="#c218d8"/><circle cx="18" cy="17.500" r="1.600" fill="#e58af0"/><circle cx="23" cy="20.500" r="1.500" fill="#e58af0"/><circle cx="18.500" cy="22.500" r="1.500" fill="#e58af0"/></svg>
      <i class="bar b1"></i><i class="bar b2"></i><i class="bar b3"></i>
    </div>
    <div class="tray">
      <div class="tote"><svg width="22" height="22" viewBox="0 0 22 22"><path d="M6 2H20V15.500H6ZM2 6 3.500 20 16 19.500" fill="none" stroke="#e3e3e6" stroke-width="2.200"/><path d="M13 4V11M9.800 8.500 13 11.500 16.200 8.500" fill="none" stroke="#e3e3e6" stroke-width="1.800"/></svg></div>
      <div class="notif"><span>2</span></div>
      <div class="date">May 1</div>
      <div class="status"><span class="tm">4:00</span><span class="ca">CA</span><svg class="wifi" width="18" height="15" viewBox="0 0 18 15"><path d="M0 3.800C5-.8 13-.8 18 3.800L9 14.500Z" fill="#e3e3e6"/></svg><svg width="13" height="18" viewBox="0 0 13 18"><path d="M7 16.500H2V3H4V1.200H7V3H9.500V7" fill="none" stroke="#e3e3e6" stroke-width="1.700"/><path d="M10 7.500 6.500 13H9V17.500L12.500 11.800H10Z" fill="#e3e3e6"/></svg></div>
    </div>
  </footer>
</div>
</body>
</html>
```
FILE: styles.css
```css
* { box-sizing: border-box; }
body { margin: 0; background: #000; font-family: Inter, "Liberation Sans", sans-serif; }
svg { display: block; flex: none; }
.defs { position: absolute; }
.screen { width: 1366px; height: 768px; display: flex; flex-direction: column; overflow: hidden; background: linear-gradient(#14202d 60px, #000 60px); }
h2, h3, p { margin: 0; }

/* browser chrome */
.tabstrip { height: 46px; background: #14202d; border-top: 1px solid #25313e; display: flex; flex: none; font-family: Roboto, sans-serif; }
.tabsearch { width: 32px; height: 32px; margin: 6px 10.200px 0 7px; border-radius: 10px; background: #323c4c; color: #e6eaf2; display: flex; align-items: center; justify-content: center; }
.tabs { display: flex; width: 1115px; height: 45px; }
.tab { flex: 1 1 0; min-width: 0; height: 45px; display: flex; align-items: center; padding-left: 6px; color: #c0cadb; position: relative; }
.fav { width: 19px; height: 19px; margin-right: 9px; }
.fav.small { width: 17px; height: 17px; margin: 0 10px 0 1px; color: #a0a4a9; }
.t { width: 31px; overflow: hidden; white-space: nowrap; font-size: 14px; line-height: 20px; margin-top: -1px; -webkit-mask-image: linear-gradient(90deg, #000 50%, transparent); mask-image: linear-gradient(90deg, #000 50%, transparent); }
.x { width: 10px; height: 10px; margin-left: 13px; }
.tab::after { content: ""; width: 2px; height: 18px; background: #323d4b; border-radius: 1px; position: absolute; left: 104.500px; top: 12px; }
.tab.nosep::after { display: none; }
.tab.active { color: #dde4ef; z-index: 0; }
.tab.active .x { color: #fff; }
.tab.active::before { content: ""; position: absolute; z-index: -1; left: -3px; top: 6px; width: 105px; height: 39px; background: #323c4c; border-radius: 12px 12px 0 0; }
.tab.active::after { display: block; background: radial-gradient(circle at 0 0, transparent 11.500px, #323c4c 12px); left: -15px; top: 33px; width: 12px; height: 12px; border-radius: 0; }
.tab.active + .tab::before { content: ""; position: absolute; left: -9.500px; top: 33px; width: 12px; height: 12px; background: radial-gradient(circle at 100% 0, transparent 11.500px, #323c4c 12px); }
.plus { width: 12px; height: 12px; margin: 16px 0 0 6.800px; }
.winctl { margin: 8px 11px 0 auto; width: 90px; }
.toolbar { height: 52px; background: #323c4c; display: flex; align-items: center; flex: none; border-radius: 8px 8px 0 0; font-family: Roboto, sans-serif; }
.navicons { margin-left: 17px; }
.omnibox { margin-left: 11px; width: 1069px; height: 39px; border-radius: 20px; background: #1b2635; display: flex; align-items: center; padding-left: 6px; margin-top: 1px; }
.site { width: 27px; height: 27px; border-radius: 50%; background: #323c4c; display: flex; align-items: center; justify-content: center; }
.url { margin-left: 10px; font-size: 16px; letter-spacing: .045px; color: #c7c9cc; white-space: nowrap; }
.url b { font-weight: 400; color: #e6e7ea; }
.omniicons { margin-left: auto; margin-right: 17.500px; }
.exticons { margin-left: 21px; }
.bookmarks { height: 41px; background: #323c4c; display: flex; align-items: center; flex: none; padding: 0 0 7px 21.500px; border-bottom: 1px solid #454d58; font: 14px Roboto, sans-serif; color: #c3c9d3; }
.bookmarks i { width: 3px; height: 18px; background: #495364; border-radius: 2px; margin: 0 16px 0 15px; }
.bookmarks span { margin-left: 7.500px; }

/* app */
.app { height: 573px; flex: none; display: flex; background: #1c1c1c; border-bottom: 2px solid #242424; }
.chat { width: 412px; height: 571px; display: flex; flex-direction: column; border-left: 1px solid #2a2a2a; color: #c9c8c3; font-size: 8.500px; }
.chathead { height: 28px; display: flex; align-items: center; padding: 0 0 1px 8px; flex: none; color: #eee; }
.chathead b { margin-left: 5px; font-weight: 600; font-size: 7.600px; width: 62px; white-space: nowrap; }
.gl { margin-left: 6px; } .cv { margin-left: 6px; } .hist { margin-left: 260px; } .pan { margin-left: 13px; }
.log { flex: 1; overflow: hidden; padding-left: 22px; display: flex; flex-direction: column; align-items: flex-start; white-space: nowrap; }
.log p { line-height: 14.350px; }
.edit { width: 184px; height: 43px; border: 1px solid #3c3c3a; border-radius: 7px; background: #262624; position: relative; color: #e3e2dd; padding: 6px 0 0 8px; }
.edit.cut { margin-left: 21px; height: 26px; border-top: 0; border-radius: 0 0 7px 7px; padding-top: 4px; flex: none; }
.vc { display: block; margin-left: 15px; font-size: 7.300px; font-weight: 500; line-height: 13px; }
.pill { position: absolute; left: 96px; bottom: -9px; width: 91px; height: 17px; border: 1px solid #3c3c3a; border-radius: 5px; background: #1f1f1e; display: flex; align-items: center; padding-left: 6px; font-size: 6.400px; font-weight: 500; color: #e3e2dd; }
.pill span { margin-left: 2px; line-height: 9px; margin-top: -1px; width: 25px; }
.pill .ne { margin-left: 9px; margin-right: 2px; }
.pill.dim > :first-child, .pill.dim > :nth-child(2) { color: #83827e; }
.p1 { margin-top: 18px; letter-spacing: -.012px; }
.refactor { margin-top: 10px; width: 132px; height: 16px; border: 1px solid #3c3c3a; border-radius: 4px; background: #1f1f1e; display: flex; align-items: center; padding: 0 0 1px 7px; flex: none; color: #f0efea; font-weight: 600; font-size: 7.550px; }
.refactor span { margin-left: 3px; }
.error { margin-top: 9px; width: 379px; height: 41px; border: 1px solid #3f3f3c; border-radius: 5px; background: #262624; display: flex; flex: none; padding: 8px 0 0 8px; color: #e5a93f; }
.error div { margin-left: 4px; display: flex; flex-direction: column; margin-top: -1px; }
.error b { font-weight: 600; font-size: 8.600px; line-height: 12px; }
.error span { font-size: 7.400px; line-height: 13px; }
.error .r { margin: 7px 11px 0 auto; color: #ddd; }
.bubble { margin: 14px 0 0 178px; width: 201px; height: 75px; border-radius: 7px; background: #262624; padding: 6px 0 0 7px; display: flex; flex-direction: column; flex: none; color: #e5e4df; font-size: 8.500px; }
.bubble span { line-height: 14px; margin-bottom: 11px; letter-spacing: -.02px; }
.bubble b { font-weight: 600; font-size: 7.450px; line-height: 12px; margin-top: -3px; color: #f2f1ec; }
.who { display: flex; align-items: center; height: 14px; margin: 9px 0 0 -14px; width: 390px; flex: none; color: #f0efea; }
.who b { font-weight: 600; font-size: 7.500px; margin-left: 5px; }
.who i { width: 7px; border-top: 1px dotted #aaa; margin: 2px 1px 0 auto; }
.p2 { margin-top: 7px; letter-spacing: -.01px; }
.log code { font-family: "Liberation Mono", monospace; font-size: 8px; margin: 0 3px; }
.editrow { display: flex; margin-top: 9px; flex: none; }
.bm { margin: 8px 9px 0 5px; }
.et { display: flex; align-items: center; line-height: 14px; }
.et b { font-size: 7.450px; font-weight: 600; margin-left: 6px; width: 136px; margin-right: 8px; }
.editrow .edit { padding-top: 6px; }
.editrow .vc { margin-top: 1px; }
.p3 { margin-top: 19px; letter-spacing: -.04px; }
.composer { width: 402px; height: 55px; margin: 0 0 2px 4px; border: 1px solid #3f3f3c; border-radius: 7px; background: #262624; flex: none; padding: 8px 6px 0 9px; }
.ph { line-height: 14px; display: block; color: #a9a8a3; letter-spacing: -.12px; }
.acts { display: flex; align-items: center; height: 17px; margin: 10px 0 0 -3px; color: #e6e5e0; font-size: 7.550px; font-weight: 500; }
.acts span { margin-left: 4px; } .at { margin-left: 8.500px; } .ed { margin-left: 9.500px; }
.acts .ed + span { margin-left: 3px; }
.chatbtn { margin-left: auto; width: 40px; height: 17px; border: 1px solid #3f3f3c; border-radius: 9px; display: flex; align-items: center; padding-left: 4px; color: #c9c8c3; }
.send { width: 12px; height: 12px; border-radius: 50%; background: #fff; display: flex; align-items: center; justify-content: center; margin-left: 5px; }

.stage { flex: 1; padding-left: 1px; }
.stagehead { height: 29px; display: flex; align-items: center; color: #eee; font-size: 8px; padding-left: 3px; padding-bottom: 2px; }
.sq { width: 16px; height: 16px; border-radius: 4px; background: #282827; display: flex; align-items: center; justify-content: center; margin-right: 2px; }
.lap { margin-left: 412px; } .home { margin-left: 6px; font-weight: 600; width: 22px; font-size: 7.500px; } .hc { margin-left: 4px; }
.toggle { width: 24px; height: 16px; border-radius: 4px; background: #282827; margin-left: 302px; display: flex; align-items: center; position: relative; padding-left: 3px; margin-right: 3px; }
.toggle::before { content: ""; position: absolute; left: 0; top: 1px; width: 14px; height: 14px; background: #1b1b1b; border-radius: 4px; }
.toggle svg { position: relative; color: #fff; }
.s1 { margin-right: 4px; } .s2 { margin-right: 3px; }
.inv, .pub { height: 16px; line-height: 16px; border-radius: 4px; text-align: center; font-weight: 600; font-size: 7.600px; }
.inv { width: 35px; background: #282827; margin-right: 3px; } .pub { width: 41px; background: #2065dd; }
.site-frame { width: 947px; height: 539px; border-radius: 7px; background: #000; overflow: hidden; position: relative; }
.nav { height: 55px; background: linear-gradient(90deg, #f1f1f1 0, #f3f5f5 90px, #f3f5f5 650px, #f1f1f1 800px); display: flex; align-items: center; padding-left: 81px; color: #2b3447; font-size: 11.500px; white-space: nowrap; }
.user { margin-left: 78.500px; } .n1 { margin-left: 6px; width: 43px; }
.n2 { margin-left: 27px; width: 60px; font-weight: 500; font-size: 11.300px; } .n3 { margin-left: 21.300px; width: 66px; font-weight: 500; font-size: 11.400px; }
.nc { margin-left: 4px; color: #7b808c; }
.n4 { margin-left: auto; width: 42.500px; }
.cta { width: 114px; margin: 0 79px 0 14px; display: flex; flex-direction: column; gap: 5px; color: #fff; }
.quote { height: 23px; line-height: 23px; border-radius: 4px; background: #cb0000; text-align: center; font-weight: 500; font-size: 8.100px; }
.call { height: 25px; padding-bottom: 1px; border-radius: 4px; background: #06966a; display: flex; align-items: center; justify-content: center; gap: 5px; font-weight: 600; font-size: 9.200px; }
.site-frame h2 { margin: 27px 0 0 80px; font-size: 11.800px; line-height: 19px; font-weight: 600; color: #fff; }
.mapcard { margin: 13px 0 0 80px; width: 788px; height: 270px; border: 1px solid #f5c518; border-radius: 7px; padding: 4px 5px; background: linear-gradient(to top right, #16204d, #54000a); position: relative; }
.map { border-radius: 6px; }
.lb text { font: 500 7px Roboto, sans-serif; fill: #464e55; stroke: #f2f8f5; stroke-width: 1.200px; paint-order: stroke; }
.lb .md text { font-size: 8.500px; fill: #39414a; } .lb .md .ab { font-size: 9px; }
.lb text.lg { font-size: 11px; fill: #39414a; }
.lb .it text { font-style: italic; }
.lb .gr text { fill: #2c8f6b; stroke: #d9f5e4; font-size: 7.800px; font-weight: 400; }
.lb .gr .mt { font-size: 8px; }
.lb .wt text { fill: #2195b4; stroke: none; font-size: 7px; }
.sh text { font: 500 5.500px Roboto, sans-serif; fill: #444; }
.i5 { font: 700 5.500px Roboto, sans-serif; fill: #fff; }
.own { font: 7px Roboto, sans-serif; fill: #fff; }
.at2 text { font-family: Roboto, sans-serif; font-size: 6px; } .at2 text:not([fill]) { fill: #444; }
.goog { font: 500 10px Roboto, sans-serif; }
.mym { font: 500 8px Roboto, sans-serif; fill: #fff; stroke: #5f98aa; stroke-width: 1px; paint-order: stroke; }
.based { position: absolute; left: 10px; top: 8px; width: 243px; height: 24px; border-radius: 4px; background: rgba(236, 199, 30, .95); box-shadow: 0 3px 6px rgba(0,0,0,.25); display: flex; align-items: center; padding: 0 0 3px 9px; gap: 5px; font-size: 9.200px; font-weight: 600; color: #151515; white-space: nowrap; }
.areas { margin: 27px 0 0 80px; width: 788px; height: 140px; background: #1a1f2b; border-top: 1px solid #32373f; color: #fff; }
.areas h3 { display: flex; justify-content: center; align-items: center; gap: 6px; padding-top: 24px; font-size: 17.800px; line-height: 26px; font-weight: 700; }
.areas h3 svg { color: #c00; }
.cities { display: flex; justify-content: space-between; padding: 25px 10.500px 0 14.500px; font-size: 11.550px; font-weight: 500; line-height: 18px; white-space: nowrap; }
.thumb { position: absolute; right: 0; top: 398px; width: 4px; height: 76px; border: 1px solid #444; border-right: 0; background: #111; }
.fab { position: absolute; left: 911px; top: 501px; width: 23px; height: 25px; border-radius: 50%; background: #1a1f2b; display: flex; align-items: center; justify-content: center; }

/* shelf */
.shelf { flex: 1; background: #000; border-top: 1px solid #151515; display: flex; align-items: center; font-family: Roboto, sans-serif; color: #e3e3e6; padding-bottom: 2px; }
.launcher { width: 41px; height: 41px; border-radius: 50%; background: #2e2f33; margin-left: 7px; display: flex; align-items: center; justify-content: center; }
.launcher i { width: 18px; height: 18px; border: 2px solid #f1f1f3; border-radius: 50%; }
.apps { margin-left: 357.300px; display: flex; gap: 26.550px; align-items: center; width: 560px; position: relative; }
.apps svg { width: 38px; height: 38px; }
.apps .sep { width: 1px; height: 24px; background: #242424; margin: 0 -13.500px; }
.cal { font: 700 9.500px Roboto, sans-serif; fill: #1a73e8; }
.bar { position: absolute; height: 2px; background: #c5c9cf; border-radius: 1px; top: 42px; }
.b1 { left: 11px; width: 16px; } .b2 { left: 402px; width: 9px; } .b3 { left: 531px; width: 9px; }
.tray { display: flex; margin-left: auto; margin-right: 7px; height: 41px; }
.tray > div { background: #2e2f33; display: flex; align-items: center; justify-content: center; font-size: 16px; font-weight: 500; }
.tote { width: 41px; border-radius: 50%; margin-right: 10px; }
.notif { width: 48px; border-radius: 21px 5px 5px 21px; margin-right: 5px; }
.notif span { width: 19px; height: 19px; border-radius: 50%; background: #e3e3e6; color: #2e2f33; font-size: 14px; line-height: 19px; text-align: center; }
.date { width: 72px; border-radius: 5px; margin-right: 5px; }
.tray .status { width: 139px; border-radius: 5px 21px 21px 5px; justify-content: flex-start; padding-left: 15px; }
.ca { margin-left: 8px; } .wifi { margin: 0 10px; }
```
